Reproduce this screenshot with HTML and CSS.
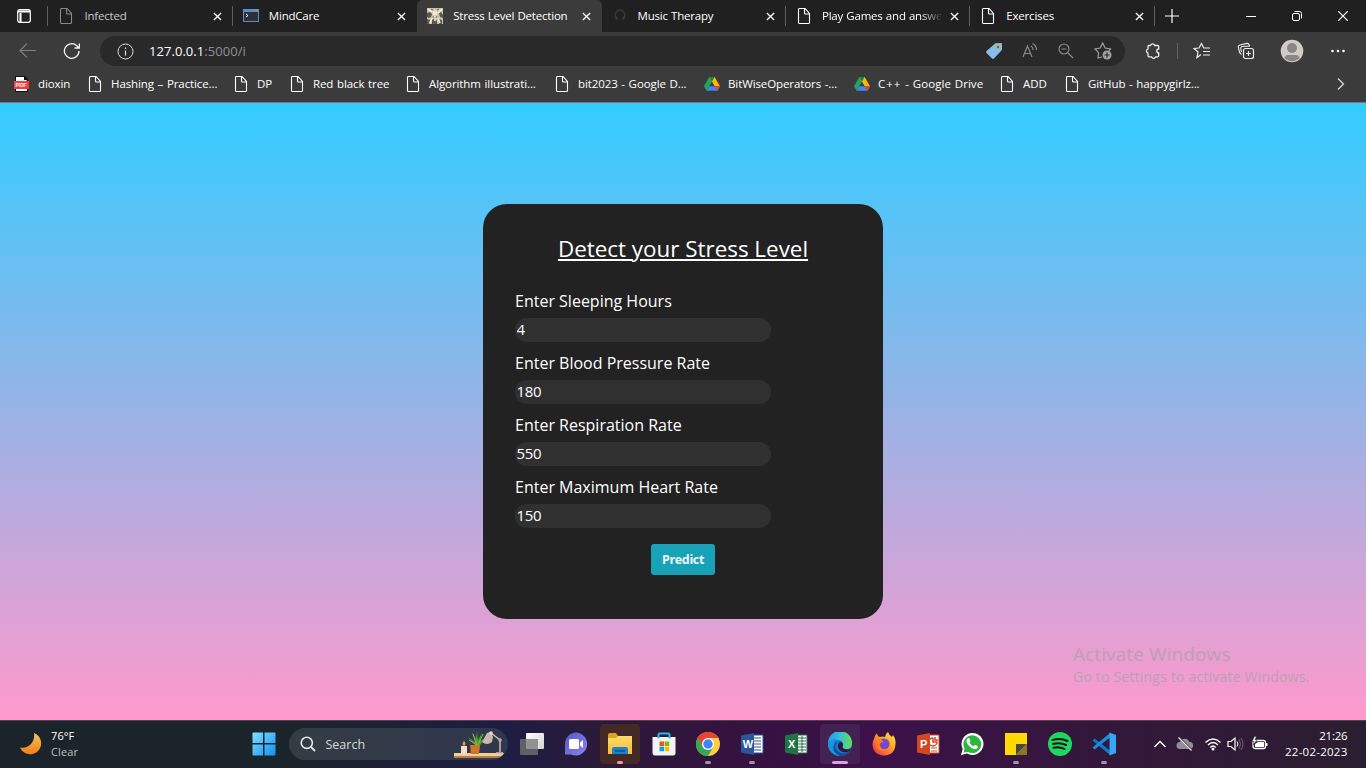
FILE: index.html
```html
<!DOCTYPE html>
<html lang="en">
<head>
<meta charset="utf-8">
<title>Stress Level Detection</title>
<link rel="stylesheet" href="styles.css">
</head>
<body>
<svg class="defs" width="0" height="0">
  <defs>
    <symbol id="doc" viewBox="0 0 16 16"><path d="M2.500 1.500v13q0 1 1 1h9q1 0 1-1V5.500L9 .5H3.500q-1 0-1 1zM8.500.5v4.500q0 1 1 1h4" fill="none" stroke="currentColor" stroke-width="1.100"/></symbol>
    <symbol id="x" viewBox="0 0 10 10"><path d="M1 1l8 8M9 1L1 9" fill="none" stroke="currentColor" stroke-width="1.500"/></symbol>
    <symbol id="drive" viewBox="0 0 16 14"><path d="M5.300 0L0 9.200l2.600 4.500L8 4.600z" fill="#1fa463"/><path d="M5.300 0h5.300L16 9.200h-5.300z" fill="#ffba00"/><path d="M5.300 0h5.300L8 4.600z" fill="#188038"/><path d="M5.300 9.200H16l-2.600 4.500H2.600z" fill="#4285f4"/><path d="M10.700 9.200H16l-2.600 4.500z" fill="#ea4335"/></symbol>
    <linearGradient id="gmoon" x2="0" y2="1"><stop stop-color="#f6c65b"/><stop offset="1" stop-color="#ef7d17"/></linearGradient>
    <linearGradient id="gwin" x2="1" y2="1"><stop stop-color="#7fe0ff"/><stop offset="1" stop-color="#0f8ff5"/></linearGradient>
    <linearGradient id="gchat" x2="1" y2="1"><stop stop-color="#5059c9"/><stop offset="1" stop-color="#8f83ee"/></linearGradient>
    <linearGradient id="gfold" x2="0" y2="1"><stop stop-color="#ffdc6b"/><stop offset="1" stop-color="#f9bd32"/></linearGradient>
    <linearGradient id="gedge" x2="1" y2="0"><stop stop-color="#239be8"/><stop offset=".5" stop-color="#35c1d5"/><stop offset="1" stop-color="#66e04b"/></linearGradient>
    <linearGradient id="gfox" x1="1" x2="0" y2="1"><stop stop-color="#fff03e"/><stop offset=".45" stop-color="#ff9a20"/><stop offset="1" stop-color="#f0234f"/></linearGradient>
    <linearGradient id="gview" x2="1" y2="1"><stop stop-color="#fff"/><stop offset="1" stop-color="#d4d4d4"/></linearGradient>
  </defs>
</svg>

<header class="browser">
  <div class="tabbar">
    <div class="tabmenu"><svg width="16" height="16" viewBox="0 0 16 16"><rect x="1.700" y="1.700" width="12.600" height="12.600" rx="2" fill="none" stroke="#fff" stroke-width="1.200"/><path d="M2 3.600h12M4.500 5v9" stroke="#fff" stroke-width="2"/></svg></div>
    <div class="tab"><svg class="tabicon dim"><use href="#doc"/></svg><span class="tabname soft">Infected</span><svg class="close"><use href="#x"/></svg></div>
    <div class="tab"><svg class="tabicon" viewBox="0 0 16 16"><rect y="1" width="16" height="13" fill="#5b8cc9"/><rect x="1" y="4" width="14" height="9" fill="#2c3139"/><path d="M11 2.500h1M13 2.500h2" stroke="#f47c58" stroke-width="1.200"/><path d="M3 6l2 1.500L3 9" stroke="#fff" fill="none"/></svg><span class="tabname">MindCare</span><svg class="close"><use href="#x"/></svg></div>
    <div class="tab active"><svg class="tabicon" viewBox="0 0 16 16"><rect width="16" height="16" fill="#c9c4ac"/><path d="M0 5l3-1 2 2-1 3-2 1-2-1zM12 5l2-1 2 3v3l-3-1zM5 12l3-2 2 3v3H5zM0 11l3 1-1 4H0zM12 11l3 1v4h-3z" fill="#5a5951"/><circle cx="8" cy="5" r="2.500" fill="#eee9cf"/><path d="M1 1l4 3M15 1l-4 4M3 15l2-5M13 15l-2-5M8 8v5" stroke="#f5f1dd" stroke-width="1.500"/><path d="M4 1l2 1M10 2l2-1M6 8l1 2M10 8L9 10" stroke="#6d6a5b"/></svg><span class="tabname">Stress Level Detection</span><svg class="close"><use href="#x"/></svg></div>
    <div class="tab plain"><svg class="tabicon" viewBox="0 0 16 16"><path d="M4 10Q2.500 8 3.500 5.500 5 2 8 2t4.500 3.500Q13.500 8 12 10" fill="none" stroke="#393939" stroke-width="1.400"/><path d="M4 8.500l1 3M12 8.500l-1 3" stroke="#3a3a3a" stroke-width="2"/></svg><span class="tabname">Music Therapy</span><svg class="close"><use href="#x"/></svg></div>
    <div class="tab"><svg class="tabicon"><use href="#doc"/></svg><span class="tabname fade">Play Games and answe</span><svg class="close"><use href="#x"/></svg></div>
    <div class="tab"><svg class="tabicon"><use href="#doc"/></svg><span class="tabname">Exercises</span><svg class="close"><use href="#x"/></svg></div>
    <div class="newtab"><svg width="14" height="14" viewBox="0 0 14 14"><path d="M7 0v14M0 7h14" stroke="#fff" stroke-width="1.200"/></svg></div>
    <div class="wincontrols">
      <svg width="10" height="10" viewBox="0 0 10 10"><path d="M0 5.500h10" stroke="#fff"/></svg>
      <svg width="10" height="10" viewBox="0 0 10 10"><g fill="none" stroke="#fff"><rect x=".5" y="2.500" width="7" height="7" rx="1.500"/><path d="M2.500.5h5q2 0 2 2v5"/></g></svg>
      <svg width="10" height="10" viewBox="0 0 10 10"><path d="M0 0l10 10M10 0L0 10" stroke="#fff" stroke-width="1.200"/></svg>
    </div>
  </div>

  <div class="toolbar">
    <div class="nav"><svg width="18" height="16" viewBox="0 0 18 16"><path d="M17 7.500H1M8 .5l-7 7 7 7" fill="none" stroke="#7d7d7d" stroke-width="1.200"/></svg></div>
    <div class="nav"><svg width="18" height="18" viewBox="0 0 18 18"><path d="M16 9a7.300 7.300 0 1 1-2.200-5.200L16 6M16.300 1.500V6H11.500" fill="none" stroke="#f4f4f4" stroke-width="1.300"/></svg></div>
    <div class="address">
      <svg width="17" height="17" viewBox="0 0 17 17"><circle cx="8.500" cy="8.500" r="7.500" fill="none" stroke="#ddd"/><path d="M8.500 7.500v5M8.500 4.500V6" stroke="#ddd" stroke-width="1.200"/></svg>
      <span class="url"><b>127.0.0.1</b>:5000/i</span>
      <div class="adicons">
        <svg width="18" height="18" viewBox="0 0 18 18"><path d="M9 2.500q1-1.200 2-1.200L16 1q1 0 1 1v5q0 1-1 2l-7 7.500q-1 .8-2 0L1.500 11q-.8-1 0-2z" fill="#86bdec"/><circle cx="13" cy="5" r="2" fill="#d8a81f"/><circle cx="13" cy="5" r=".9" fill="#665024"/></svg>
        <svg width="18" height="18" viewBox="0 0 18 18"><path d="M2 15L6.500 4 11 15M3.600 11.500h5.800M10 4q2 1 2 4M11.500 1.500q4 2 4 6.500" fill="none" stroke="#8b8b8b" stroke-width="1.200"/></svg>
        <svg width="18" height="18" viewBox="0 0 18 18"><path d="M10 11l5 5M3.500 7h5" stroke="#8b8b8b" stroke-width="1.200"/><circle cx="6" cy="7" r="5" fill="none" stroke="#8b8b8b" stroke-width="1.200"/></svg>
        <svg width="18" height="18" viewBox="0 0 18 18"><path d="M8 15l-4 1 .6-5.300L1 7l5.200-1L8.700 1l2.400 5L16.500 7l-1.700 2" fill="none" stroke="#a0a0a0" stroke-width="1.200"/><circle cx="13" cy="13" r="4.500" fill="#a0a0a0"/><path d="M13 10.500v5M10.500 13h5" stroke="#292929" stroke-width="1.200"/></svg>
      </div>
    </div>
    <div class="actions">
      <svg width="18" height="18" viewBox="0 0 18 18"><path d="M4.500 3.500h2a2.200 2.200 0 0 1 4.200 0h3q1 0 1 1V7a1.900 1.900 0 1 0 0 3.800v3q0 1-1 1h-2a2.200 2.200 0 0 1-4.200 0h-2.500q-1 0-1-1v-2.600a2.200 2.200 0 0 1 0-4.200V4.500q0-1 .5-1z" fill="none" stroke="#eee" stroke-width="1.300"/></svg>
      <i class="vline"></i>
      <svg width="18" height="18" viewBox="0 0 18 18"><path d="M8 12.500L4 15.500 5 10 1 6.500 6 6l2.500-4.500L10.700 6H17M10 9.500h7M10 13h7" fill="none" stroke="#eee" stroke-width="1.200"/></svg>
      <svg width="18" height="18" viewBox="0 0 18 18"><rect x="6.500" y="6.500" width="10" height="10" rx="2" fill="none" stroke="#eee" stroke-width="1.200"/><path d="M11.500 9v5M9 11.500h5M4.500 12.500Q2 11 2 8L1.300 5Q1 3.500 3 3l7-1.600q1.500-.3 2 1.300l.3 1.300M4.500 10l-.8-3.500q-.2-1.500 1.300-2L13 4" fill="none" stroke="#eee" stroke-width="1.100"/></svg>
      <svg width="24" height="24" viewBox="0 0 24 24"><circle cx="12" cy="12" r="11.300" fill="#cfcbc7"/><circle cx="12" cy="9" r="5" fill="#8a8683"/><path d="M4.300 19q1-3 4-3h7.400q3 0 4 3a11 11 0 0 1-15.400 0" fill="#8a8683"/></svg>
      <svg width="14" height="4" viewBox="0 0 14 4"><circle cx="1.500" cy="2" r="1.300" fill="#fff"/><circle cx="7" cy="2" r="1.300" fill="#fff"/><circle cx="12.500" cy="2" r="1.300" fill="#fff"/></svg>
    </div>
  </div>

  <nav class="bookmarks">
    <a><svg viewBox="0 0 16 16"><path d="M1 0h10l3 3v13H1z" fill="#111"/><path d="M2 1h8l3 4v10H2z" fill="#fff"/><path d="M10 0v4h4" fill="#111"/><rect y="5" width="15" height="8" fill="#f23d3d"/><text x="1.600" y="11.200" class="pdf">PDF</text></svg>dioxin</a>
    <a><svg><use href="#doc"/></svg>Hashing – Practice...</a>
    <a><svg><use href="#doc"/></svg>DP</a>
    <a><svg><use href="#doc"/></svg>Red black tree</a>
    <a><svg><use href="#doc"/></svg>Algorithm illustrati...</a>
    <a><svg><use href="#doc"/></svg>bit2023 - Google D...</a>
    <a><svg><use href="#drive"/></svg>BitWiseOperators -...</a>
    <a class="roomy"><svg><use href="#drive"/></svg><span><span class="plus">C++</span> - Google Drive</span></a>
    <a><svg><use href="#doc"/></svg>ADD</a>
    <a><svg><use href="#doc"/></svg>GitHub - happygirlz...</a>
    <svg class="more" viewBox="0 0 8 14"><path d="M1 1.500L6.500 7 1 12.500" fill="none" stroke="#ddd" stroke-width="1.200"/></svg>
  </nav>
</header>

<main class="page">
  <form class="card">
    <h1>Detect your Stress Level</h1>
    <label>Enter Sleeping Hours<input value="4"></label>
    <label>Enter Blood Pressure Rate<input value="180"></label>
    <label>Enter Respiration Rate<input value="550"></label>
    <label>Enter Maximum Heart Rate<input value="150"></label>
    <button type="button">Predict</button>
  </form>
  <div class="watermark"><p class="wm1">Activate Windows</p><p class="wm2">Go to Settings to activate Windows.</p></div>
</main>

<footer class="taskbar">
  <div class="weather">
    <svg width="24" height="24" viewBox="0 0 24 24"><path d="M15 1a11 11 0 1 1-14 14.500q7 1 11-3.500t3-11z" fill="url(#gmoon)"/></svg>
    <div class="temps"><span>76°F</span><span class="cond">Clear</span></div>
  </div>
  <div class="app start"><svg width="24" height="24" viewBox="0 0 24 24"><path d="M.5 1.500q0-1 1-1H11V11H.5zM12.500.5h10q1 0 1 1V11h-11zM.5 12.500H11v11H1.500q-1 0-1-1zM12.500 12.500h11v10q0 1-1 1h-10z" fill="url(#gwin)"/></svg></div>
  <div class="search">
    <svg width="16" height="16" viewBox="0 0 16 16"><circle cx="6.800" cy="6.800" r="5.600" fill="none" stroke="#e7e8ea" stroke-width="1.600"/><path d="M11 11l4 4" stroke="#e7e8ea" stroke-width="1.800"/></svg>
    <span>Search</span>
    <svg class="scene" width="52" height="32" viewBox="0 0 52 32"><path d="M1 25h50q-2 5-8 5H1z" fill="#b98042"/><path d="M1 25h50q-1 2.500-4 3H1z" fill="#f0cf98"/><rect x="8" y="18" width="6" height="8" fill="#f1dfc8"/><path d="M11 13q3 3 0 5q-3-2 0-5" fill="#f39b25"/><path d="M22 17L15 9l7 5-3-10 4 7L24 3l1 9 4-7-2 8 7-4-7 8z" fill="#4b9b31"/><path d="M24 17L20 6M25 17l5-11M24 17L16 12" stroke="#79c445"/><path d="M17 17h10l-1 9h-8z" fill="#cf742a"/><path d="M29 14l5-9 4-1 2 5-1 5q-5 4-10 0z" fill="#c9b9a8"/><path d="M38 5l9 7v12M43 25h7" fill="none" stroke="#d1beb2" stroke-width="1.500"/><circle cx="38" cy="5" r="1.800" fill="#eaded1"/><circle cx="47" cy="12" r="1.800" fill="#c5a998"/></svg>
  </div>
  <div class="app"><svg width="24" height="24" viewBox="0 0 24 24"><rect x="6" y="1" width="18" height="16" rx="1" fill="url(#gview)"/><rect y="7" width="18" height="16" rx="1" fill="#686868" opacity=".9"/><rect x="6" y="7" width="12" height="10" fill="#929292"/></svg></div>
  <div class="app"><svg width="24" height="24" viewBox="0 0 24 24"><path d="M12 .5A11.500 11.500 0 1 1 7 22.500H1V12A11.500 11.500 0 0 1 12 .5" fill="url(#gchat)"/><rect x="5" y="7" width="10" height="10" rx="1.500" fill="#fff"/><path d="M16 10.500L19 8v8l-3-2.500z" fill="#fff"/></svg></div>
  <div class="app lit warm"><svg width="24" height="24" viewBox="0 0 24 24"><path d="M0 3q0-2 2-2h6l2 3h12q2 0 2 2v4H0z" fill="#dba11f"/><path d="M0 6h8l2-2h14v18H0z" fill="url(#gfold)"/><path d="M4 22v-5q0-2 2-2h12q2 0 2 2v5z" fill="#1784d3"/><path d="M7 19h10" stroke="#0a5a9d" stroke-width="2"/></svg><i class="dot pink"></i></div>
  <div class="app"><svg width="24" height="24" viewBox="0 0 24 24"><path d="M6.500 6V2.500q0-1 1-1h9q1 0 1 1V6" fill="none" stroke="#29b9ea" stroke-width="2"/><path d="M.5 5h23v16q0 2.500-2.500 2.500H3Q.5 23.500.5 21z" fill="#f3f3f3"/><path d="M7.500 9.500H12V14H7.500z" fill="#f15122"/><path d="M12.700 9.500h4.500V14h-4.500z" fill="#7fba00"/><path d="M7.500 14.700H12v4.500H7.500z" fill="#00a4ef"/><path d="M12.700 14.700h4.500v4.500h-4.500z" fill="#ffb900"/><path d="M6.500 5v1.500M17.500 5v1.500" stroke="#29b9ea" stroke-width="2"/></svg></div>
  <div class="app"><svg width="24" height="24" viewBox="0 0 24 24"><circle cx="12" cy="12" r="12" fill="#fc4"/><path d="M1.600 6A12 12 0 0 1 22.400 6H12L6.800 15z" fill="#ea4335"/><path d="M1.600 6A12 12 0 0 0 12 24l5.200-9H6.800z" fill="#34a853"/><circle cx="12" cy="12" r="6" fill="#fff"/><circle cx="12" cy="12" r="4.700" fill="#4285f4"/></svg><i class="dot"></i></div>
  <div class="app"><svg width="24" height="24" viewBox="0 0 24 24"><path d="M12 3h11v18H12z" fill="#fff" stroke="#2b579a"/><path d="M13 6h8M13 9h8M13 12h8M13 15h8M13 18h8" stroke="#2b579a"/><path d="M1 3.500L14 1v22L1 20.500z" fill="#2b579a"/><text x="2.800" y="16" class="letter">W</text></svg><i class="dot"></i></div>
  <div class="app"><svg width="24" height="24" viewBox="0 0 24 24"><path d="M12 3h11v18H12z" fill="#fff" stroke="#207346"/><path d="M14 6h8M14 9h8M14 12h8M14 15h8M14 18h8M18 4v16" stroke="#207346"/><path d="M1 3.500L14 1v22L1 20.500z" fill="#207346"/><text x="4" y="16" class="letter">X</text></svg></div>
  <div class="app lit"><svg width="24" height="24" viewBox="0 0 24 24"><circle cx="12" cy="12" r="12" fill="#1479cf"/><path d="M0 11A12 12 0 0 1 24 11q0 6-5.500 6-4.500 0-3.500-3Q16 8 9 8q-6 0-9 3z" fill="url(#gedge)"/><path d="M0 12Q2 7 9 7q-3 2-3 7 0 7 7 10A12 12 0 0 1 0 12" fill="#1a92df"/><path d="M9.500 10q-5 5 1 10 5 3 11-1-3 5-9.500 5Q2 19 7 11q1-1 2.500-1" fill="#0d4f9b"/><path d="M11.500 10q4 0 3.500 3.500-2 3.500 3.500 4 3 0 4.500-1.500l-1.500 3q-6 3-10-1-3.500-4 0-8" fill="#35153f"/></svg><i class="dot wide"></i></div>
  <div class="app"><svg width="24" height="24" viewBox="0 0 24 24"><path d="M2 7q1-4 3-6 0 3 3 4 2-1 5 0 0-3 3-5 1 3 4 5l1-2q3 4 2.500 9Q23 23 12 23.500 1 23 .5 12q0-3 1.500-5" fill="url(#gfox)"/><circle cx="12" cy="12" r="5.500" fill="#7349cf"/><path d="M4 8q4-2 8 2-5 0-4 4 2 5 8 2-4 5-9 2-4-3-3-10" fill="#ff7b24"/></svg></div>
  <div class="app"><svg width="24" height="24" viewBox="0 0 24 24"><path d="M12 3h11v18H12z" fill="#fff" stroke="#d24726"/><path d="M15 16h6M15 19h6" stroke="#d24726"/><path d="M17 6v4h4a4 4 0 1 1-4-4M19 5v3h3" fill="none" stroke="#d24726" stroke-width="1.500"/><path d="M1 3.500L14 1v22L1 20.500z" fill="#d24726"/><text x="4" y="16" class="letter">P</text></svg></div>
  <div class="app"><svg width="24" height="24" viewBox="0 0 24 24"><path d="M1 23l1.700-6A11 11 0 1 1 7 21.500z" fill="#fff"/><path d="M3.500 20.500l1-4A8.900 8.900 0 1 1 8 20z" fill="#2bb741"/><path d="M7.500 6.500Q9 5.500 9.500 7l1 2-1 1.500q1 2.500 4 3.700l1.500-1.500 2.500 1.200q1 .8-.5 2.500-2 1.500-5-.2Q7.500 13.500 6.500 10q-.2-2.500 1-3.500" fill="#fff"/></svg></div>
  <div class="app"><svg width="24" height="24" viewBox="0 0 24 24"><path d="M1 1h22v22H1z" fill="#ffd900"/><path d="M12 12h11L12 23z" fill="#42464a"/><path d="M23 12v11H12z" fill="#8b7624"/></svg><i class="dot"></i></div>
  <div class="app"><svg width="24" height="24" viewBox="0 0 24 24"><circle cx="12" cy="12" r="12" fill="#1ed760"/><path d="M4.500 8q8-2.500 15 1M5 12q7-2 13 1M5.500 15.700q6-1.500 11 1.300" fill="none" stroke="#191414" stroke-width="2" stroke-linecap="round"/></svg></div>
  <div class="app"><svg width="24" height="24" viewBox="0 0 24 24"><path d="M.5 8.500l2-2L18 18.500V23z" fill="#0b7bc9"/><path d="M.5 15.500l2 2L18 5.500V1z" fill="#168fdc"/><path d="M17.500.5L24 3v18l-6.500 2.500z" fill="#34a7f2"/></svg><i class="dot"></i></div>
  <div class="tray">
    <svg width="14" height="16" viewBox="0 0 14 16"><path d="M1.500 11L7 5.500l5.500 5.500" fill="none" stroke="#fff" stroke-width="1.300"/></svg>
    <svg width="18" height="16" viewBox="0 0 18 16"><path d="M4 13a3.500 3.500 0 0 1 0-7 5 5 0 0 1 9.300 0 3.500 3.500 0 0 1 .5 7z" fill="#978c98"/><path d="M3 1.500l13 13" stroke="#33203c" stroke-width="2"/><path d="M2.500 1.500l13 13" stroke="#eee" stroke-width="1.200"/></svg>
    <svg width="18" height="16" viewBox="0 0 18 16"><path d="M1.500 6.500q7.500-7 15 0M4 9q5-5 10 0M6.300 11.500q2.700-3 5.400 0" fill="none" stroke="#fff" stroke-width="1.400"/><circle cx="9" cy="13" r="1.500" fill="#fff"/></svg>
    <svg width="18" height="16" viewBox="0 0 18 16"><path d="M2 5.500h3L9 2v12l-4-3.500H2z" fill="none" stroke="#fff" stroke-width="1.200"/><path d="M11 5.500q2 2.500 0 5" fill="none" stroke="#fff"/><path d="M13 3.500q3 4.500 0 9M15 2q4 6 0 12" fill="none" stroke="#776878"/></svg>
    <svg width="18" height="16" viewBox="0 0 18 16"><rect x="2" y="4.500" width="12.500" height="8" rx="2" fill="none" stroke="#fff" stroke-width="1.300"/><path d="M7 6h6v5H4V8zM15 7h1.500v3H15z" fill="#fff"/><path d="M3.500.5L1 5.500h2L2 9l4-5H4L5.500.5z" fill="#fff" stroke="#2e1e35" stroke-width=".5"/></svg>
  </div>
  <div class="clock"><span class="time">21:26</span><span class="date">22-02-2023</span></div>
</footer>
</body>
</html>
```
FILE: styles.css
```css
* { box-sizing: border-box; }
body { margin: 0; width: 1366px; height: 768px; overflow: hidden; display: flex; flex-direction: column; font-family: "Open Sans", "Noto Sans", sans-serif; color: #fff; }
svg { display: block; flex: none; }
.defs { position: absolute; }

.browser { height: 103px; background: #3b3b3b; border-bottom: 1px solid #777; font-size: 11.5px; letter-spacing: -0.2px; }
.tabbar { height: 32px; display: flex; background: #202020; }
.tabmenu { width: 48.4px; display: flex; align-items: center; justify-content: center; }
.tab { width: 184.4px; height: 32px; display: flex; align-items: center; padding: 0 10px; position: relative; }
.tab::before { content: ""; position: absolute; left: -1px; top: 6px; width: 1px; height: 20px; background: #606060; }
.tab.active { background: #3b3b3b; border-radius: 5px 5px 0 0; }
.tab.active::before, .tab.plain::before { display: none; }
.tabicon { width: 16px; height: 16px; margin-right: 10px; }
.dim { color: #888; }
.tabname { width: 119px; height: 18px; line-height: 18px; padding-top: 0; white-space: nowrap; word-spacing: 0.4px; }
.soft { color: #c8c8c8; }
.fade { -webkit-mask-image: linear-gradient(90deg, #000 82%, transparent 102%); mask-image: linear-gradient(90deg, #000 82%, transparent 102%); }
.close { width: 9px; height: 9px; margin-left: 9.5px; }
.newtab { width: 36px; margin-left: -1px; display: flex; align-items: center; justify-content: center; background: linear-gradient(#606060, #606060) 0 6px / 1px 20px no-repeat; }
.wincontrols { margin-left: auto; width: 138px; display: grid; grid-template-columns: repeat(3, 46px); align-items: center; justify-items: center; }

.toolbar { height: 38px; display: flex; align-items: center; padding-left: 6px; }
.nav { width: 44px; display: flex; justify-content: center; }
.address { width: 1025px; height: 30px; margin-left: 6px; border-radius: 15px; background: #292929; display: flex; align-items: center; padding: 0 13px 0 17px; }
.url { margin-left: 15px; font-size: 13px; letter-spacing: 0.05px; color: #8f8f8f; }
.url b { font-weight: 400; color: #fff; }
.adicons { margin-left: auto; display: flex; gap: 18.3px; }
.actions { display: grid; grid-template-columns: 56px 0 41px 47px 45px 47px; justify-items: center; align-items: center; }
.vline { width: 1px; height: 16px; margin-left: -8px; background: #626262; }

.bookmarks { height: 28px; display: grid; grid-template-columns: 73px 146px 56px 116px 149px 150px 150px 145px 65px 1fr 51px; padding-left: 14px; align-items: center; letter-spacing: -0.1px; word-spacing: 0.8px; line-height: 15px; }
.bookmarks a { display: flex; align-items: center; gap: 8px; height: 16px; padding-bottom: 1px; white-space: nowrap; }
.bookmarks a svg { width: 16px; height: 16px; }
.bookmarks .roomy { letter-spacing: 0.05px; word-spacing: 0.8px; }
.bookmarks .plus { letter-spacing: 1px; }
.bookmarks .more { width: 8px; height: 14px; justify-self: center; }
.pdf { font: bold 5.5px "Liberation Sans", sans-serif; fill: #fff; letter-spacing: 0; }

.page { position: relative; height: 617px; background: linear-gradient(#33ccff, #ff99cc); display: flex; justify-content: center; align-items: flex-start; }
.card { width: 400px; height: 415px; margin-top: 101px; padding: 28px 32px; background: #222; border-radius: 24px; display: flex; flex-direction: column; }
h1 { margin: 0 0 24px; font-size: 22.4px; line-height: 33px; font-weight: 400; text-align: center; text-decoration: underline; text-decoration-thickness: 2px; text-underline-offset: 2px; }
label { display: flex; flex-direction: column; height: 62px; font-size: 16px; line-height: 24px; }
input { width: 256px; height: 23.5px; margin-top: 5px; padding: 0 1.5px 1px; border: 0; border-radius: 12px; background: #303030; color: #fff; font: 15px "Open Sans", sans-serif; letter-spacing: -0.3px; }
button { width: 64px; height: 31px; margin: 7px auto 0; padding: 0; border: 0; border-radius: 3px; background: #17a2b8; color: #f0fafb; font: 700 12.5px "Open Sans", sans-serif; letter-spacing: -0.35px; }
.watermark { position: absolute; left: 1073px; top: 539px; color: #b9a1b5; white-space: nowrap; }
.watermark p { margin: 0; }
.wm1 { font-size: 19px; line-height: 24px; letter-spacing: 0.1px; }
.wm2 { font-size: 14px; line-height: 22px; letter-spacing: 0.2px; }

.taskbar { height: 48px; padding-bottom: 1px; display: flex; align-items: center; border-top: 1px solid #494553; background: linear-gradient(90deg, #1b242a 0, #1b242a 290px, #1d1d43 510px, #2b1a38 600px, #35123f 740px, #3c1149 870px, #33173a 1100px, #2b1e30 1366px); font-size: 11.5px; }
.weather { width: 242px; padding-left: 19px; display: flex; gap: 8px; align-items: center; }
.temps { display: flex; flex-direction: column; line-height: 16px; font-size: 11px; letter-spacing: 0.1px; }
.cond { color: #bcc0c2; }
.app { width: 44px; height: 40px; position: relative; display: flex; align-items: center; justify-content: center; }
.start { margin-right: 2.5px; }
.search { width: 219px; height: 32px; margin-right: 2.5px; padding: 0 3px 0 11px; border-radius: 16px; background: linear-gradient(90deg, #343c43, #30364f); display: flex; align-items: center; gap: 10px; color: #d8dadd; font-size: 12.5px; }
.scene { margin-left: auto; }
.lit::before { content: ""; position: absolute; inset: 0 2px; border-radius: 4px; background: #432152; }
.lit svg { position: relative; }
.lit.warm::before { background: #442a27; }
.dot { position: absolute; bottom: 0; left: 19px; width: 6px; height: 3px; border-radius: 2px; background: #a096a5; }
.dot.pink { background: #ff9499; }
.dot.wide { left: 14px; width: 16px; background: #dc9ce6; }
.letter { font: bold 11px "Liberation Sans", sans-serif; fill: #fff; }
.tray { margin-left: 27px; width: 116px; display: grid; grid-template-columns: 22.5px 28px 22.5px 25px 18px; }
.clock { margin-left: auto; margin-right: 18.5px; display: flex; flex-direction: column; align-items: flex-end; line-height: 16px; font-size: 11.5px; }
.time { letter-spacing: -0.2px; }
.date { letter-spacing: 0.25px; }
```
